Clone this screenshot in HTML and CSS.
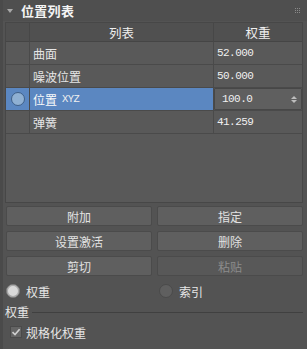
FILE: index.html
```html
<!DOCTYPE html>
<html lang="zh">
<head>
  <meta charset="UTF-8" />
  <meta name="viewport" content="width=device-width, initial-scale=1.0" />
  <title>位置列表</title>
  <link rel="stylesheet" href="styles.css">
</head>
<body>

  <div class="panel">
    <!-- title bar -->
    <div class="title-bar">
      <span class="caret"></span>
      <span class="title">位置列表</span>
      <span class="grip">
        <i></i><i></i><i></i><i></i><i></i><i></i><i></i><i></i><i></i>
      </span>
    </div>

    <!-- list -->
    <div class="list">
      <div class="row head">
        <div class="cell ind"></div>
        <div class="cell name">列表</div>
        <div class="cell weight">权重</div>
      </div>
      <div class="row">
        <div class="cell ind"></div>
        <div class="cell name">曲面</div>
        <div class="cell weight num">52.000</div>
      </div>
      <div class="row">
        <div class="cell ind"></div>
        <div class="cell name">噪波位置</div>
        <div class="cell weight num">50.000</div>
      </div>
      <div class="row selected">
        <div class="cell ind"><span class="dot"></span></div>
        <div class="cell name">位置 <span class="mono">XYZ</span></div>
        <div class="cell weight">
          <div class="spinner">
            <span class="num">100.0</span>
            <span class="arrows"><span class="up"></span><span class="down"></span></span>
          </div>
        </div>
      </div>
      <div class="row">
        <div class="cell ind"></div>
        <div class="cell name">弹簧</div>
        <div class="cell weight num">41.259</div>
      </div>
    </div>

    <!-- buttons -->
    <div class="buttons">
      <button>附加</button>
      <button>指定</button>
      <button>设置激活</button>
      <button>删除</button>
      <button>剪切</button>
      <button class="disabled">粘贴</button>
    </div>

    <div class="radios">
      <label class="radio on"><span class="circle"></span>权重</label>
      <label class="radio"><span class="circle"></span>索引</label>
    </div>

    <div class="group-label"><span>权重</span><span class="rule"></span></div>

    <label class="check"><span class="box">
      <svg width="10" height="10" viewBox="0 0 10 10"><path d="M1.5 5.2 L4 7.6 L8.6 2.2" fill="none" stroke="#cfcfcf" stroke-width="1.6"/></svg>
    </span>规格化权重</label>
  </div>

</body>
</html>
```

FILE: styles.css
```css
body {
  margin: 0;
  background: #535353;
  font-family: "Noto Sans CJK SC", "Noto Sans", sans-serif;
  font-size: 12px;
  color: #e6e6e6;
}

.panel {
  width: 307px;
  height: 349px;
  box-sizing: border-box;
  border-left: 3px solid #4a4a4a;
  background: #535353;
  overflow: hidden;
}

/* title bar */
.title-bar {
  height: 21px;
  display: flex;
  align-items: center;
  background: #4f4f4f;
  margin-left: -3px;
  padding-left: 7px;
}

.caret {
  width: 0;
  height: 0;
  border-left: 3px solid transparent;
  border-right: 3px solid transparent;
  border-top: 4px solid #a8a8a8;
  margin-right: 8px;
  margin-top: 1px;
}

.title {
  font-size: 13px;
  font-weight: bold;
  color: #f4f4f4;
  letter-spacing: 0.3px;
}

.grip {
  margin-left: auto;
  margin-right: 7px;
  display: grid;
  grid-template-columns: repeat(3, 1px);
  gap: 1px;
}

.grip i {
  width: 1px;
  height: 1px;
  background: #8a8a8a;
}

/* list */
.list {
  margin: 1px 4px 0 2px;
  height: 181px;
  background: #595959;
  border: 1px solid #474747;
  box-sizing: border-box;
}

.row {
  display: grid;
  grid-template-columns: 24px 1fr 88px;
  height: 23px;
  border-bottom: 1px solid #4a4a4a;
  box-sizing: border-box;
}

.row.head {
  height: 19px;
  background: #505050;
  border-bottom: 1px solid #454545;
}

.cell {
  display: flex;
  align-items: center;
  border-right: 1px solid #4a4a4a;
  white-space: nowrap;
}

.cell.weight {
  border-right: none;
  padding-left: 3px;
}

.cell.name {
  padding-left: 3px;
}

.head .cell {
  justify-content: center;
  font-size: 12.5px;
  color: #efefef;
  border-right-color: #474747;
}

.head .cell.name {
  padding-left: 0;
}

.head .cell.weight {
  padding-left: 0;
}

.num,
.mono {
  font-family: "Liberation Mono", "DejaVu Sans Mono", monospace;
  font-size: 11px;
  letter-spacing: -0.55px;
  color: #f0f0f0;
}

.mono {
  font-size: 10.5px;
  margin-left: 5px;
}

.row.selected .ind,
.row.selected .name {
  background: #5b87c1;
  color: #fafafa;
}

.row.selected .ind {
  justify-content: center;
  padding-left: 1px;
}

.dot {
  width: 12px;
  height: 12px;
  border-radius: 50%;
  background: #8fb0d3;
  border: 1px solid #3e5f88;
}

.row.selected .weight {
  padding: 0;
  align-items: stretch;
}

.spinner {
  flex: 1;
  display: flex;
  align-items: center;
  background: #5f5f5f;
  border: 1px solid #474747;
  border-radius: 1px;
  padding-left: 7px;
  padding-right: 4px;
}

.arrows {
  margin-left: auto;
  display: flex;
  flex-direction: column;
  gap: 1px;
}

.arrows .up,
.arrows .down {
  width: 0;
  height: 0;
  border-left: 3px solid transparent;
  border-right: 3px solid transparent;
}

.arrows .up {
  border-bottom: 3px solid #bdbdbd;
}

.arrows .down {
  border-top: 3px solid #bdbdbd;
}

/* buttons */
.buttons {
  display: grid;
  grid-template-columns: 1fr 1fr;
  column-gap: 5px;
  row-gap: 5px;
  margin: 3px 4px 0 3px;
}

.buttons button {
  height: 20px;
  padding: 0;
  background: #5f5f5f;
  border: 1px solid #4b4b4b;
  border-radius: 2px;
  font-family: "Noto Sans CJK SC", "Noto Sans", sans-serif;
  font-size: 12px;
  color: #e2e2e2;
}

.buttons button.disabled {
  background: #585858;
  color: #8c8c8c;
}

/* radios */
.radios {
  display: grid;
  grid-template-columns: 1fr 1fr;
  column-gap: 5px;
  margin: 6px 4px 0 3px;
  height: 18px;
}

.radio {
  display: flex;
  align-items: center;
  gap: 6px;
}

.radio:last-child {
  padding-left: 2px;
}

.circle {
  width: 12px;
  height: 12px;
  border-radius: 50%;
  background: #5f5f5f;
  border: 1px solid #4a4a4a;
}

.radio.on .circle {
  background: #d9d9d9;
  border: 1px solid #7a7a7a;
  box-shadow: inset 0 0 0 1px #a9a9a9;
}

/* group */
.group-label {
  display: flex;
  align-items: center;
  gap: 3px;
  margin: 3px 4px 0 2px;
  height: 17px;
}

.group-label .rule {
  flex: 1;
  height: 1px;
  background: #404040;
  margin-top: 1px;
}

.check {
  display: flex;
  align-items: center;
  gap: 4px;
  margin: 3px 0 0 7px;
  height: 18px;
}

.box {
  width: 12px;
  height: 12px;
  box-sizing: border-box;
  background: #646464;
  border: 1px solid #4a4a4a;
  display: flex;
  align-items: center;
  justify-content: center;
}
```
